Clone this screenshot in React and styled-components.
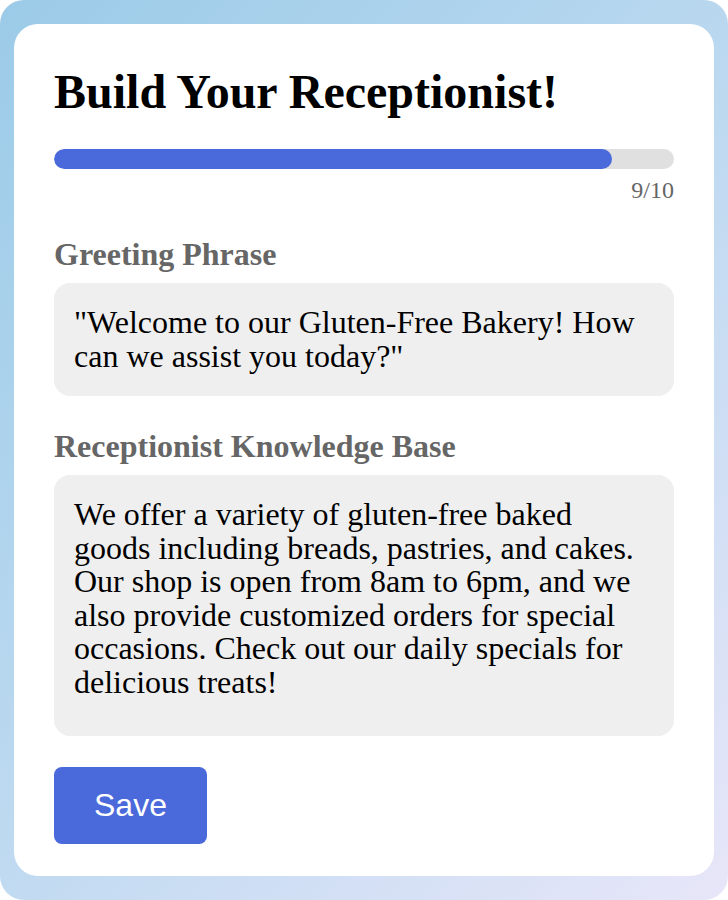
import styled, { createGlobalStyle } from 'styled-components'

const GlobalStyle = createGlobalStyle`
	html, body {
		margin: 0;
		padding: 0;
		background: #ffffff;
	}
	body {
		font-family: "Liberation Serif", "Times New Roman", serif;
	}
`

const StyledPage = styled.div`
	width: 728px;
	height: 900px;
	box-sizing: border-box;
	padding: 24px 14px;
	border-radius: 24px;
	background: linear-gradient(135deg, #9bcbe8 0%, #bcd9f0 50%, #e8e6f9 100%);
`

const StyledCard = styled.div`
	height: 100%;
	box-sizing: border-box;
	padding: 40px;
	background: #ffffff;
	border-radius: 24px;
`

const StyledTitle = styled.h1`
	margin: 0 0 30px;
	font-size: 48px;
	font-weight: 700;
	color: #000000;
`

const StyledTrack = styled.div`
	width: 100%;
	height: 20px;
	border-radius: 10px;
	background: #e0e0e0;
	overflow: hidden;
`

const StyledFill = styled.div`
	height: 100%;
	border-radius: 10px;
	background: #4a69da;
`

const StyledStep = styled.div`
	margin-top: 8px;
	text-align: right;
	font-size: 24px;
	color: #666666;
`

const StyledLabel = styled.div`
	margin: 32px 0 10px;
	font-size: 32px;
	font-weight: 700;
	color: #666666;
`

const StyledBox = styled.div`
	height: ${(props) => props.$height}px;
	box-sizing: border-box;
	padding: 23px 20px 20px;
	background: #efefef;
	border-radius: 16px;
	font-size: 32px;
	line-height: 33.5px;
	color: #000000;
`

const StyledButton = styled.button`
	margin-top: 31px;
	padding: 20px 40px;
	border: none;
	border-radius: 8px;
	background: #4a69da;
	color: #ffffff;
	font-family: "Liberation Sans", Arial, sans-serif;
	font-size: 32px;
	cursor: pointer;
`

const App = () => {
	const step = 9
	const total = 10
	return (
		<>
			<GlobalStyle />
			<StyledPage>
				<StyledCard>
					<StyledTitle>Build Your Receptionist!</StyledTitle>
					<StyledTrack>
						<StyledFill style={{ width: `${(step / total) * 100}%` }} />
					</StyledTrack>
					<StyledStep>
						{step}/{total}
					</StyledStep>
					<StyledLabel>Greeting Phrase</StyledLabel>
					<StyledBox $height={113}>
						"Welcome to our Gluten-Free Bakery! How can we assist you today?"
					</StyledBox>
					<StyledLabel>Receptionist Knowledge Base</StyledLabel>
					<StyledBox $height={261}>
						We offer a variety of gluten-free baked goods including breads, pastries, and cakes. Our shop is
						open from 8am to 6pm, and we also provide customized orders for special occasions. Check out our
						daily specials for delicious treats!
					</StyledBox>
					<StyledButton>Save</StyledButton>
				</StyledCard>
			</StyledPage>
		</>
	)
}

export default App
